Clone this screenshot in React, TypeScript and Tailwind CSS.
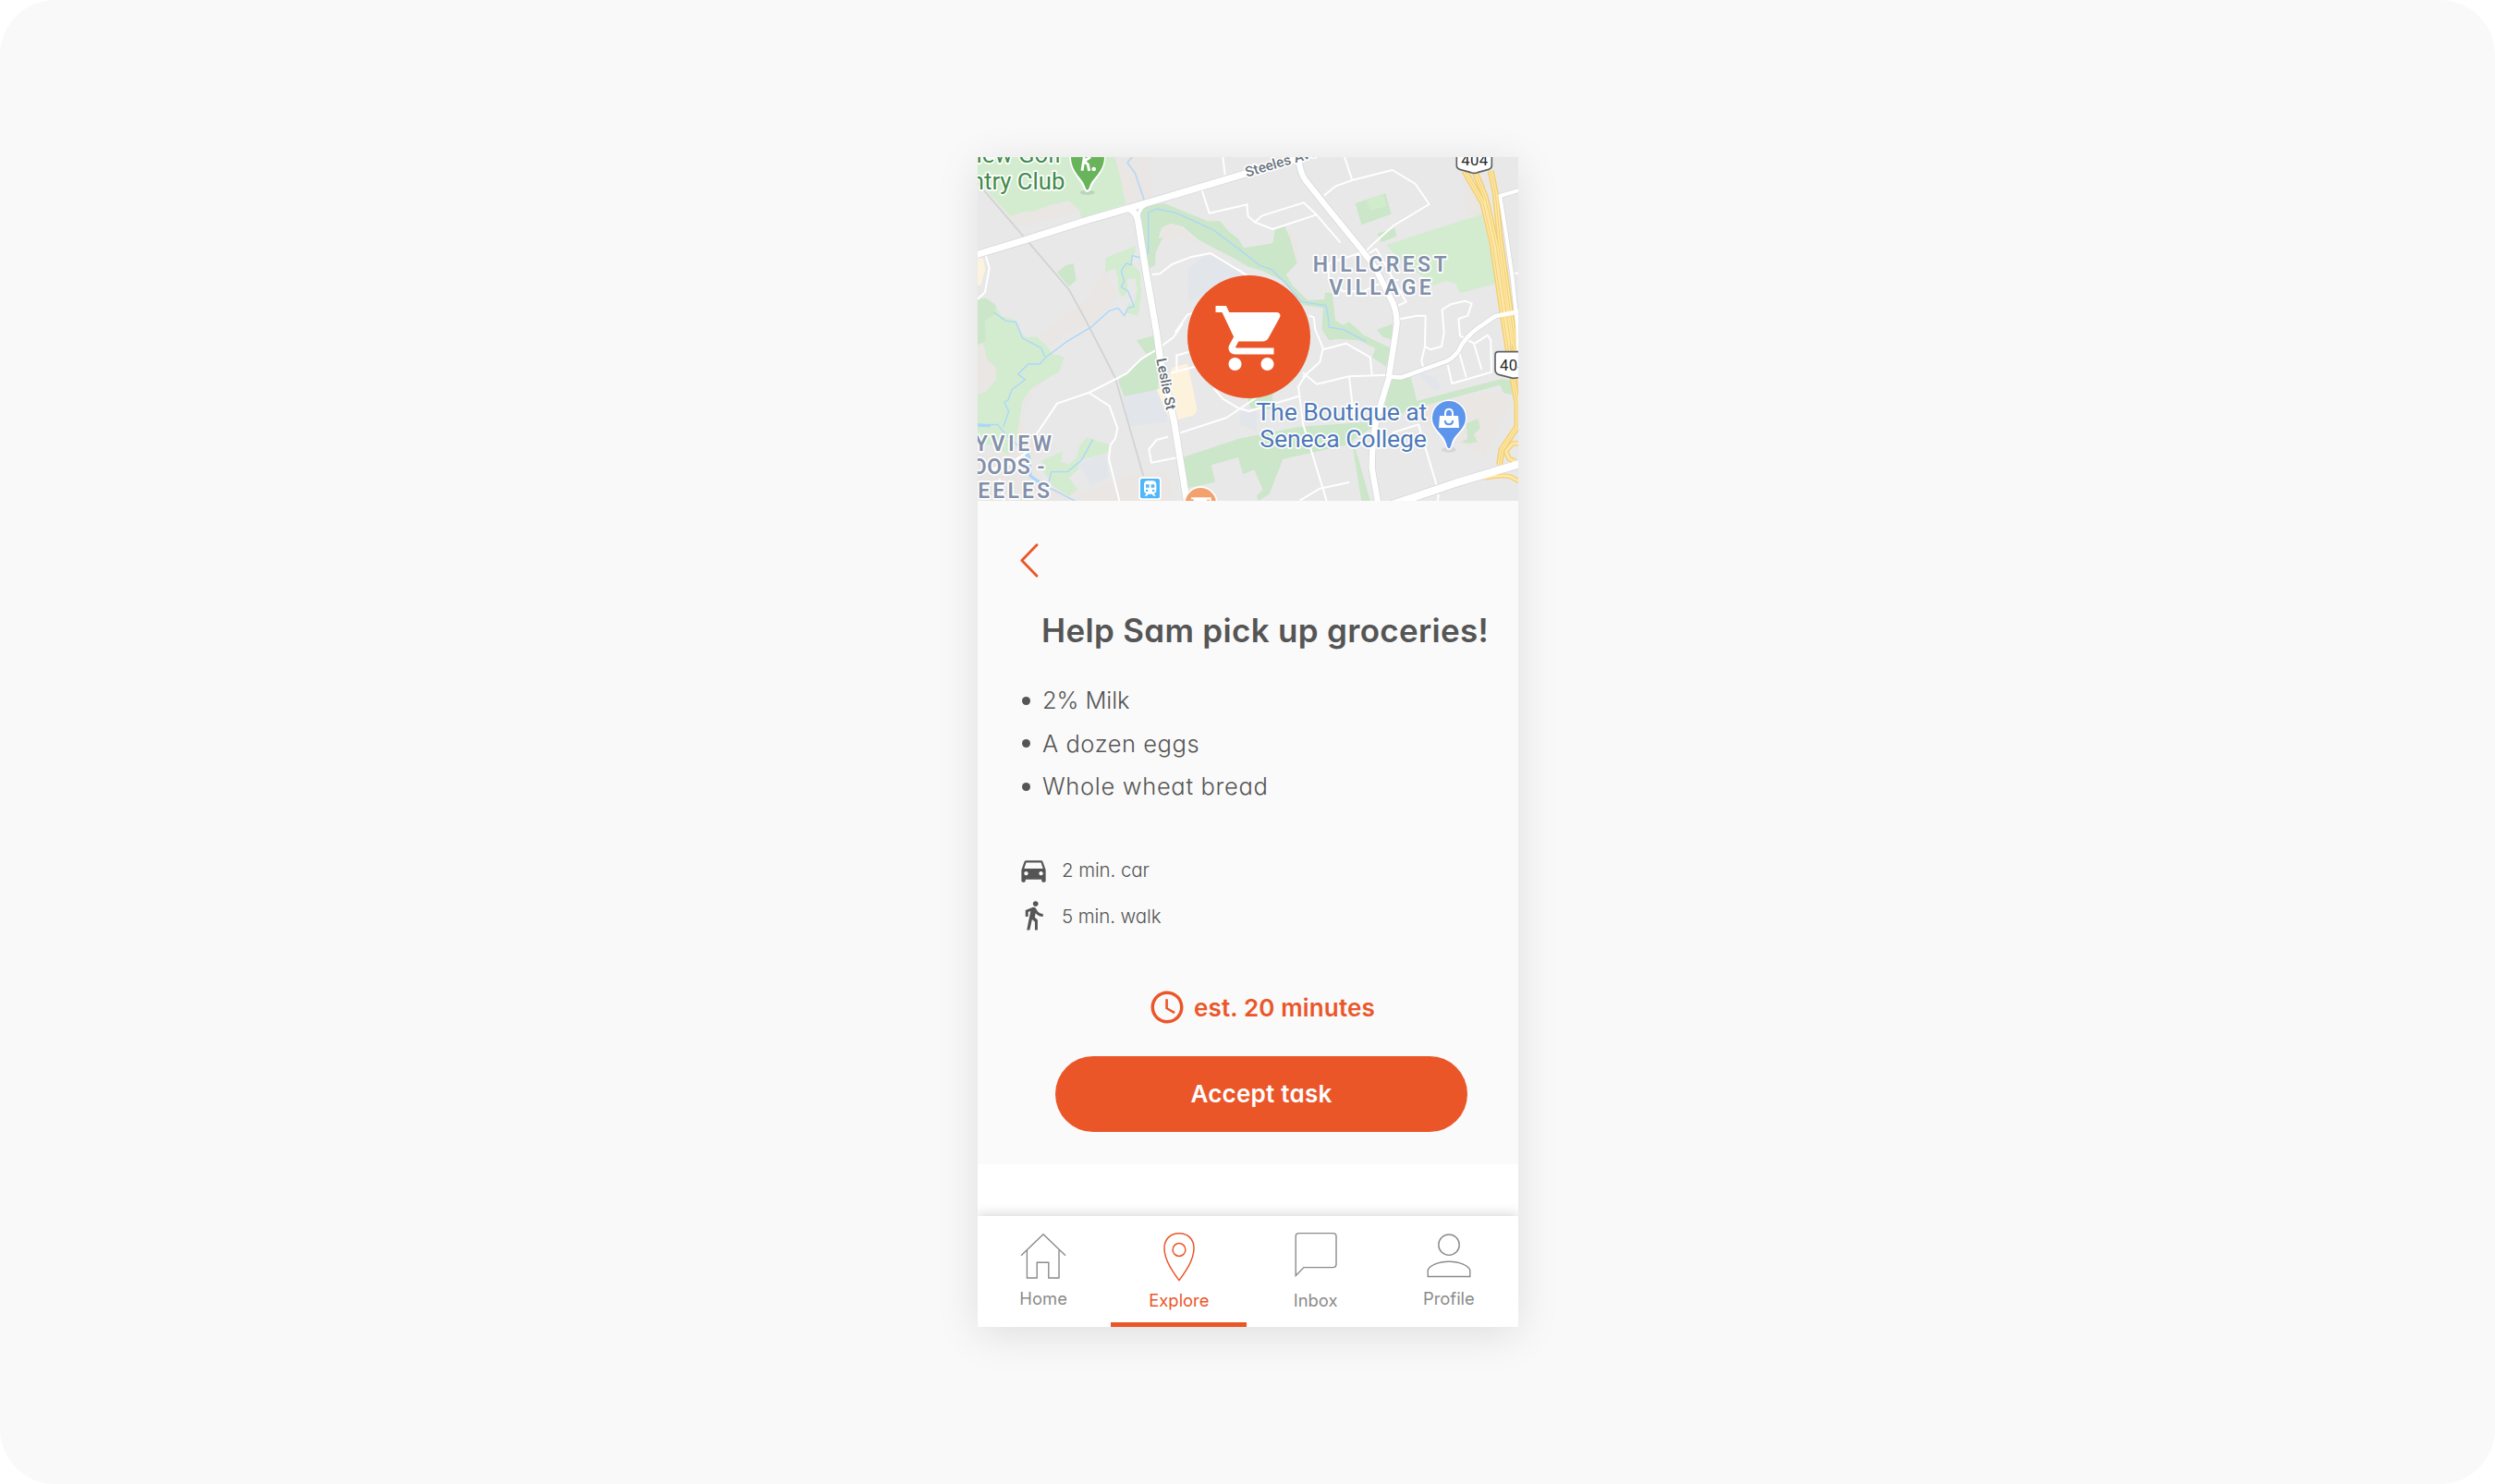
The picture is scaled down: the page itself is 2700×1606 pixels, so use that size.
import React from "react";
import { MdDirectionsCar, MdDirectionsWalk, MdSchedule, MdShoppingCart } from "react-icons/md";

const parks = [
  "54,30 500,30 520,110 535,182 390,230 384,202 350,172 290,186 235,206 205,208 160,222 54,105",
  "468,358 565,318 566,335 552,370 582,405 585,470 575,545 535,535 545,500 560,515 572,460 565,425 540,425 540,470 525,485 512,470 508,420 500,392 468,406",
  "54,492 80,488 108,505 130,545 178,560 190,600 215,616 245,612 275,640 300,672 318,672 335,682 320,725 230,780 200,820 182,930 170,990 150,995 110,968 54,950",
  "262,1015 330,985 325,1020 350,1028 375,1005 385,965 410,940 485,965 475,990 385,1015 380,1045 350,1070 380,1110 350,1130 300,1100 270,1055",
  "1380,315 1690,215 1718,330 1740,440 1620,472 1605,440 1575,433 1530,448 1490,410 1440,380",
];

const woods = [
  "312,404 340,382 365,375 374,430 350,450",
  "54,488 80,488 112,512 110,540 78,560 80,630 54,640",
  "582,200 600,190 660,180 745,215 800,238 840,238 870,272 900,295 918,325 1012,310 1020,262 1052,256 1070,300 1090,375 1055,412 1075,445 1125,495 1180,492 1182,470 1205,470 1215,560 1240,575 1260,565 1310,610 1395,650 1380,710 1335,680 1345,650 1290,625 1225,620 1195,625 1172,590 1175,520 1110,510 1080,470 1040,430 980,400 930,385 880,355 820,325 770,298 720,255 680,245 652,258 640,295 655,290 632,340 630,382 612,390 600,340",
  "570,625 625,610 640,655 600,668",
  "510,755 570,700 640,655 640,785 530,808",
  "720,1005 900,945 1100,905 1325,890 1345,910 1325,915 1270,950 1290,1010 1328,1146 1300,1146 1270,960 1045,1010 1000,1125 965,1146 960,1130 980,1110 952,1045 915,1060 900,1005 812,1030 825,1085 735,1105",
  "1280,180 1378,148 1397,215 1300,250",
  "1352,278 1408,260 1414,288 1364,306",
  "1390,750 1460,745 1480,822 1755,750 1785,755 1790,802 1760,795 1750,770 1500,838 1420,865 1368,890",
  "1350,590 1400,572 1400,622 1370,615",
  "930,812 1010,798 1015,850 940,845",
  "1624,955 1645,945 1640,895 1678,880 1685,910 1665,930 1676,955 1650,960",
];

const sand = [
  "54,640 72,632 84,685 114,715 114,752 78,795 54,800",
  "75,105 160,222 350,172 384,202 360,215 170,262 60,110",
  "535,30 610,30 620,160 540,185 505,60",
  "470,405 510,480 430,570 340,600 300,640 250,612 400,500",
  "200,820 335,700 325,680 240,780 185,900 150,1050 330,960 290,960 210,940",
  "655,258 700,250 800,330 720,290 650,300",
  "1620,30 1720,30 1690,215 1640,215",
  "1400,850 1750,790 1790,830 1700,1000 1480,890",
  "54,1000 200,980 280,1100 400,1120 560,1060 660,1050 700,1146 54,1146",
  "1060,260 1092,300 1095,400 1070,320",
];

const schools = [
  "525,807 665,780 670,890 545,905",
  "735,392 800,345 910,400 930,400 900,420 738,500",
  "1480,730 1540,745 1560,780 1540,790",
  "905,850 960,850 960,920 905,900",
  "380,1025 470,990 480,1070 420,1095",
];

const mainRoads = [
  { d: "M30 353L205 300L400 238L600 180L930 82L1100 32", w: 22 },
  { d: "M548 200Q572 212 575 240L600 400L635 600L646 680L692 890L735 1160", w: 21 },
  { d: "M600 185Q572 200 575 240", w: 10 },
  { d: "M1095 30Q1100 80 1118 105L1190 195L1300 330L1342 385L1390 480Q1415 520 1415 570L1408 620L1388 750L1350 875Q1334 950 1334 1040L1355 1160", w: 19 },
  { d: "M1390 743L1430 745L1578 692Q1610 675 1625 640Q1650 600 1700 570L1735 546L1820 530", w: 14 },
  { d: "M1380 1165L1600 1090L1840 1018", w: 25 },
  { d: "M1820 135L1750 156L1768 270L1790 420L1806 575L1812 700", w: 12 },
];

const sideRoads = [
  "M80 350L92 390L78 468L54 492",
  "M782 138L806 212L930 184L928 188L932 222L955 242L1012 264L1154 217",
  "M955 240L978 220L1112 178L1154 217L1232 308",
  "M850 30L857 88", "M1245 30L1270 105",
  "M1178 155L1215 125L1270 105L1400 72L1475 117L1520 183L1405 252L1342 308L1315 335L1194 375V430L1240 466H1305L1350 445L1420 428",
  "M1320 345L1348 328L1445 500L1420 512",
  "M620 412L645 409L685 378L745 355L810 342L925 412",
  "M900 395L940 425",
  "M695 600L735 542L755 535",
  "M720 570L690 615L635 655L585 685L538 732L415 795L312 830L245 930",
  "M415 795L482 838L508 910L500 945L485 965L480 1010L514 1146",
  "M700 670V722M698 674L750 660M680 732L800 700L835 745",
  "M820 780L850 815L900 845L935 855L1095 807",
  "M960 810L862 876L712 925",
  "M672 938L635 948L610 978L618 1022L700 1006",
  "M54 1055L150 1030L220 985M125 1075L140 1146",
  "M1130 545L1145 550L1150 590L1175 650L1165 695L1110 745",
  "M1110 730L1155 767L1260 742L1390 737",
  "M1175 655L1250 635L1328 680L1334 735",
  "M1118 740L1095 775L1110 895L1187 1146M1260 742L1275 870",
  "M1260 1086L1165 1106L1100 1145",
  "M1425 556L1480 545L1508 545L1506 645L1495 690L1500 710M1506 645L1525 655L1560 645L1568 600L1562 525L1590 508L1635 497L1658 505L1645 545L1615 555L1620 610L1665 635L1690 720",
  "M1580 705L1594 765L1722 728L1720 625L1710 608L1668 635M1618 668L1640 745",
  "M1400 925L1485 898L1544 1096M1550 1125L1548 1146",
  "M1790 407H1810",
];

const streams = [
  { d: "M555 30L540 48L565 82L595 170", w: 4 },
  { d: "M585 355L608 340V210L635 198L700 212L820 267L930 350L970 382L1008 395L1050 435L1105 500L1185 512L1192 550L1195 582L1240 590L1315 628", w: 4 },
  { d: "M585 357L556 350L552 380L536 375L520 400L530 435L520 452L542 465L562 515L542 520L530 545L510 520L480 530L425 580L345 628L275 680L255 702H218L185 735L208 752L165 785L152 820L140 825L155 855L138 905", w: 4 },
  { d: "M108 535L145 562L178 565L200 618L260 650L272 678", w: 4 },
  { d: "M54 900L118 898L150 935L210 990L225 1065L290 1105L370 1146", w: 4 },
  { d: "M54 900L95 902", w: 10 },
  { d: "M205 985L220 1000L225 1065L260 1090", w: 9 },
  { d: "M428 947L390 1015L345 1052L293 1052L285 1085", w: 4 },
];

const highways = [
  "M1635 75L1695 180L1725 310L1762 560L1790 740L1806 830V905L1755 980L1748 1030",
  "M1720 75L1735 150L1750 300L1776 480L1798 640L1815 780",
  "M1665 70L1702 160L1738 320L1765 500L1785 640",
];

function CityMap() {
  return (
    <svg className="block h-[372px] w-[585px] shrink-0" viewBox="54 30 1755 1116" fontFamily="Roboto, sans-serif">
      <rect x="54" y="30" width="1755" height="1116" fill="#e8e8e8" />
      <g fill="#e9e6e3">{sand.map((p) => <polygon key={p} points={p} />)}</g>
      <g fill="#d3ecd0">{parks.map((p) => <polygon key={p} points={p} />)}</g>
      <g fill="#cbe6c8">{woods.map((p) => <polygon key={p} points={p} />)}</g>
      <polygon points={sand[0]} fill="#e9e6e3" />
      <polygon points="1315,172 1370,150 1382,190 1330,203" fill="#d1ebcd" />
      <g fill="#e2e6ea">{schools.map((p) => <polygon key={p} points={p} />)}</g>
      <path d="M685 715L735 700L766 845Q764 865 750 870L680 888L635 785L670 770ZM54 355L72 360L79 395L64 445H54Z" fill="#fdf3dc" />
      <path d="M54 115L205 290L350 460L405 560L500 745L592 1065" fill="none" stroke="#d0d1d4" strokeWidth="5" />
      <g fill="none" stroke="#aad6fb" strokeLinejoin="round">{streams.map((s) => <path key={s.d} d={s.d} strokeWidth={s.w} />)}</g>
      <g fill="none" stroke="#ffffff" strokeWidth="6" strokeLinejoin="round">{sideRoads.map((d) => <path key={d} d={d} />)}</g>
      <g fill="none" stroke="#d3d5d8" strokeLinejoin="round">{mainRoads.map((r) => <path key={r.d} d={r.d} strokeWidth={r.w + 4} />)}</g>
      <g fill="none" strokeLinejoin="round">
        <path d="M1700 1072Q1760 1060 1785 1068L1825 1090" stroke="#f3cf73" strokeWidth="15" />
        <path d="M1700 1072Q1760 1060 1785 1068L1825 1090" stroke="#fde8a8" strokeWidth="8" />
        <path d="M1820 960H1790L1768 985L1780 1010L1800 1018" stroke="#f3cf73" strokeWidth="17" />
        <path d="M1820 960H1790L1768 985L1780 1010L1800 1018" stroke="#fde8a8" strokeWidth="9" />
        <g stroke="#f3cf73" strokeWidth="21">{highways.map((d) => <path key={d} d={d} />)}</g>
        <g stroke="#fde8a8" strokeWidth="12">{highways.map((d) => <path key={d} d={d} />)}</g>
        <g stroke="#f3cf73" strokeWidth="3">{highways.map((d) => <path key={d} d={d} />)}</g>
      </g>
      <g fill="none" stroke="#ffffff" strokeLinejoin="round">{mainRoads.map((r) => <path key={r.d} d={r.d} strokeWidth={r.w} />)}</g>

      <g stroke="#ffffff" strokeWidth="10" strokeLinejoin="round" paintOrder="stroke">
        <g fill="#418a4b" fontSize="77" textAnchor="end">
          <text x="328" y="48">Bayview Golf</text>
          <text x="337" y="136">Country Club</text>
        </g>
        <g fill="#4f79b8" fontSize="80">
          <text x="958" y="885" textLength="555">The Boutique at</text>
          <text x="970" y="973" textLength="542">Seneca College</text>
        </g>
        <g fill="#8390aa" fontSize="69" fontWeight="600">
          <text x="1142" y="401" textLength="435">HILLCREST</text>
          <text x="1195" y="477" textLength="331">VILLAGE</text>
          <text x="-63" y="983" textLength="357">BAYVIEW</text>
          <text x="-28" y="1059" textLength="300">WOODS -</text>
          <text x="-48" y="1136" textLength="336">STEELES</text>
        </g>
        <g fill="#6b7680" fontSize="46" fontWeight="500">
          <text transform="translate(928 95) rotate(-16.5)">Steeles Ave</text>
          <text transform="translate(634 686) rotate(79)" textLength="170" fill="#616a72">Leslie St</text>
        </g>
      </g>

      <ellipse cx="410" cy="145" rx="24" ry="8" fill="#000000" opacity=".1" />
      <path d="M410 144Q401 143 398 132C390 103 352 80 352 30H469C469 80 430 103 422 132Q419 143 410 144Z" fill="#ffffff" />
      <path d="M410 137Q405 136 402 124C394 98 357 78 357 30H465C465 78 426 98 418 124Q415 136 410 137Z" fill="#69b35a" />
      <path d="M400 30L393 74M396 40L412 54L416 75M398 44L420 30" fill="none" stroke="#ffffff" strokeWidth="9" />
      <circle cx="431" cy="69" r="7" fill="#ffffff" />

      <ellipse cx="1584" cy="980" rx="24" ry="9" fill="#000000" opacity=".07" />
      <path d="M1584 981Q1576 980 1573 968C1563 930 1526 920 1526 876A58 58 0 0 1 1642 876C1642 920 1605 930 1595 968Q1592 980 1584 981Z" fill="#ffffff" />
      <path d="M1584 976Q1579 975 1576 962C1566 925 1530 916 1530 876A54 54 0 0 1 1638 876C1638 916 1602 925 1592 962Q1589 975 1584 976Z" fill="#5e95ec" />
      <path d="M1554 870H1614L1617 909H1551Z" fill="#ffffff" />
      <path d="M1572 875V863Q1572 848 1584 848T1596 863V875" fill="none" stroke="#ffffff" strokeWidth="6" />
      <path d="M1571 885Q1573 898 1584 898T1597 885" fill="none" stroke="#5e95ec" strokeWidth="6" />

      <g fill="#ffffff" stroke="#5f6266" strokeWidth="5">
        <path d="M1609 20V58Q1609 67 1619 70L1655 80Q1666 84 1677 80L1713 70Q1723 67 1723 58V20Z" />
        <path d="M1745 662H1820V745L1792 748L1745 736Q1734 732 1734 720V672Q1734 662 1745 662Z" />
      </g>
      <g fill="#25272a" fontSize="50" fontWeight="400">
        <text x="1624" y="58" textLength="86">404</text>
        <text x="1749" y="722" textLength="86">404</text>
      </g>

      <rect x="577" y="1069" width="73" height="74" rx="10" fill="#ffffff" />
      <rect x="582" y="1074" width="63" height="64" rx="6" fill="#51b7f9" />
      <path d="M604 1081H624Q634 1083 634 1093V1114Q634 1121 626 1122L632 1130H625L620 1124H608L603 1130H596L602 1122Q594 1121 594 1114V1093Q594 1083 604 1081Z" fill="#ffffff" />
      <path d="M600 1093H611V1103H600ZM617 1093H628V1103H617ZM600 1110H607V1116H600ZM621 1110H628V1116H621Z" fill="#51b7f9" />

      <circle cx="778" cy="1154" r="55" fill="#ffffff" />
      <circle cx="778" cy="1154" r="50" fill="#f3a16d" />
      <path d="M747 1135H812V1146H806V1142H799V1146H757L753 1141H747Z" fill="#ffffff" />
    </svg>
  );
}

const sans = "font-[Inter,sans-serif] [font-feature-settings:'cv11']";

const groceries = [
  { label: "2% Milk", tracking: "tracking-[-0.1px]" },
  { label: "A dozen eggs", tracking: "tracking-[0.55px]" },
  { label: "Whole wheat bread", tracking: "tracking-[0.68px]" },
];

function TaskDetails() {
  return (
    <section className="flex h-[718px] shrink-0 flex-col bg-[#fafafa] text-[#555555]">
      <button aria-label="Back" className="mt-[45px] ml-[46px] h-[38px] w-[22px]">
        <svg viewBox="0 0 22 38" className="h-[38px] w-[22px]" fill="none" stroke="#eb5629" strokeWidth="2.8" strokeLinecap="round" strokeLinejoin="round">
          <path d="M18 2.8L1.8 19.5L18 36.2" />
        </svg>
      </button>
      <h1 className="mt-[29px] ml-[69px] h-[56px] text-[35px] leading-[56px] font-semibold tracking-[0.31px] whitespace-nowrap">
        Help Sam pick up groceries!
      </h1>
      <ul className="mt-[25px] ml-[48px] flex flex-col text-[25.5px] font-light">
        {groceries.map((g) => (
          <li key={g.label} className="flex h-[46.6px] items-center gap-[13px]">
            <span className="size-[9px] rounded-full bg-[#555555]" />
            <span className={g.tracking}>{g.label}</span>
          </li>
        ))}
      </ul>
      <div className="mt-[42px] ml-[43px] flex flex-col text-[20.5px] font-light tracking-[-0.1px]">
        <div className="flex h-[49px] items-center gap-[13px]">
          <MdDirectionsCar className="size-[35px]" />
          <span className="pt-[3px]">2 min. car</span>
        </div>
        <div className="flex h-[50px] items-center gap-[13px]">
          <MdDirectionsWalk className="size-[35px]" />
          <span className="pt-[3px]">5 min. walk</span>
        </div>
      </div>
      <div className="mt-[53px] ml-[184px] flex h-[42px] items-center gap-[8px] text-[26px] font-semibold tracking-[0.15px] text-[#eb5629]">
        <MdSchedule className="size-[42px]" />
        <span className="pt-[2px]">est. 20 minutes</span>
      </div>
      <button className="mt-[32px] ml-[84px] flex h-[82px] w-[446px] shrink-0 items-center justify-center rounded-full bg-[#eb5629] text-[26px] font-semibold tracking-[0.25px] text-white">
        Accept task
      </button>
    </section>
  );
}

function NavBar() {
  return (
    <nav className="relative grid h-[120px] shrink-0 grid-cols-4 bg-white font-[Inter,sans-serif] text-[18.4px] leading-[22px] font-normal text-[#8b8b8b] shadow-[0_-2px_12px_rgba(0,0,0,0.16)]">
      <a className="flex flex-col items-center pt-[18px] pr-[4px]">
        <svg viewBox="0 0 50 50" className="size-[50px]" fill="none" stroke="currentColor" strokeWidth="1.4">
          <path d="M1 24.8L25 1.8L49 24.8M7.4 19V49H18.2V32.3H30.8V49H42V19" />
        </svg>
        <span className="mt-[9.5px]">Home</span>
      </a>
      <a className="flex flex-col items-center pt-[17px] pr-[3px] text-[#eb5629]">
        <svg viewBox="0 0 36 54" className="h-[54px] w-[36px]" fill="none" stroke="currentColor" strokeWidth="1.5">
          <path d="M18 52.6C12 44.5 2 31 2 18C2 8 8.5 1.7 18 1.7S34 8 34 18C34 31 24 44.5 18 52.6Z" />
          <circle cx="18" cy="19.5" r="6.9" />
        </svg>
        <span className="mt-[8.5px]">Explore</span>
      </a>
      <a className="flex flex-col items-center pt-[17px]">
        <svg viewBox="0 0 48 50" className="h-[50px] w-[48px]" fill="none" stroke="currentColor" strokeWidth="1.4">
          <path d="M2.2 47.5V5Q2.2 1.6 5.6 1.6H42.5Q46 1.6 46 5V35Q46 38.6 42.5 38.6H11Z" />
        </svg>
        <span className="mt-[12.5px]">Inbox</span>
      </a>
      <a className="flex flex-col items-center pt-[17px] pr-[4px]">
        <svg viewBox="0 0 50 50" className="size-[50px]" fill="none" stroke="currentColor" strokeWidth="1.4">
          <circle cx="25" cy="14.2" r="11.2" />
          <path d="M2.2 48.5V41.5C4 37 13 32.3 25 32.3S46 37 47.8 41.5V48.5Z" />
        </svg>
        <span className="mt-[10.5px]">Profile</span>
      </a>
      <span className="absolute bottom-0 left-[144px] h-[5px] w-[147px] bg-[#eb5629]" />
    </nav>
  );
}

export default function App() {
  return (
    <div className="h-[1606px] w-[2700px] overflow-hidden bg-white">
      <div className="h-full w-full rounded-[60px] bg-[#f9f9f9] pt-[170px] pl-[1058px]">
        <main className={`flex h-[1266px] w-[585px] flex-col bg-white shadow-[0_8px_44px_rgba(0,0,0,0.11)] ${sans}`}>
          <div className="relative h-[372px] shrink-0 overflow-hidden">
            <CityMap />
            <div className="absolute top-[127.5px] left-[227px] flex size-[133px] items-center justify-center rounded-full bg-[#eb5629]">
              <MdShoppingCart className="mt-[3px] ml-[4px] size-[84px] shrink-0 text-white" />
            </div>
          </div>
          <TaskDetails />
          <div className="flex flex-col overflow-hidden">
            <div className="h-[56px] shrink-0" />
            <NavBar />
          </div>
        </main>
      </div>
    </div>
  );
}
